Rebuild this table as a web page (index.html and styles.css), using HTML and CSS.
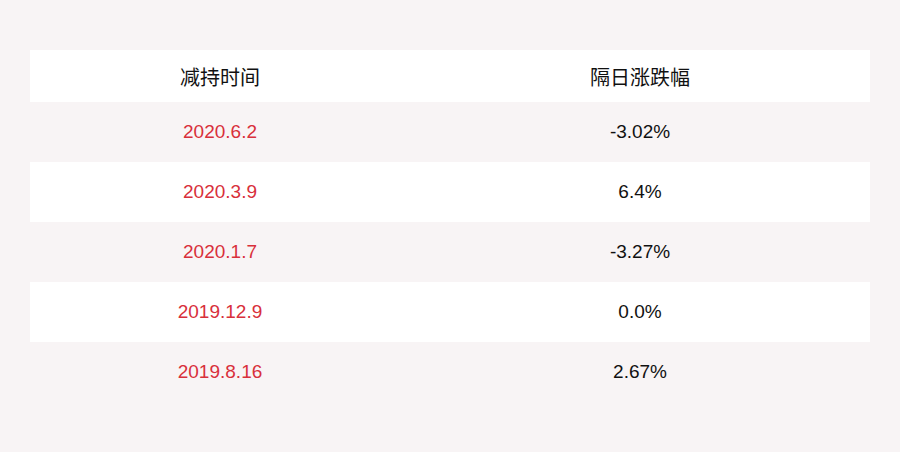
FILE: index.html
```html
<!DOCTYPE html>
<html>
<head>
<meta charset="utf-8">
<link rel="stylesheet" href="styles.css">
</head>
<body>
<div class="page">
  <div class="table">
    <div class="row head"><div class="c1">减持时间</div><div class="c2">隔日涨跌幅</div></div>
    <div class="row"><div class="c1 red">2020.6.2</div><div class="c2">-3.02%</div></div>
    <div class="row alt"><div class="c1 red">2020.3.9</div><div class="c2">6.4%</div></div>
    <div class="row"><div class="c1 red">2020.1.7</div><div class="c2">-3.27%</div></div>
    <div class="row alt"><div class="c1 red">2019.12.9</div><div class="c2">0.0%</div></div>
    <div class="row"><div class="c1 red">2019.8.16</div><div class="c2">2.67%</div></div>
  </div>
</div>
</body>
</html>
```
FILE: styles.css
```css
html, body {
  margin: 0;
  padding: 0;
  background: #f8f4f5;
}
.page {
  width: 900px;
  height: 452px;
  padding: 50px 30px;
  box-sizing: border-box;
}
.table {
  display: flex;
  flex-direction: column;
}
.row {
  display: grid;
  grid-template-columns: 380px 460px;
  height: 60px;
  align-items: center;
  text-align: center;
  font-family: "Liberation Sans", Arial, sans-serif;
  font-size: 19px;
  color: #111;
}
.row.head {
  height: 52px;
  background: #fff;
  font-family: "Noto Sans CJK SC", sans-serif;
  font-size: 20px;
  color: #111;
}
.row.alt {
  background: #fff;
}
.red {
  color: #d8303b;
}
```
